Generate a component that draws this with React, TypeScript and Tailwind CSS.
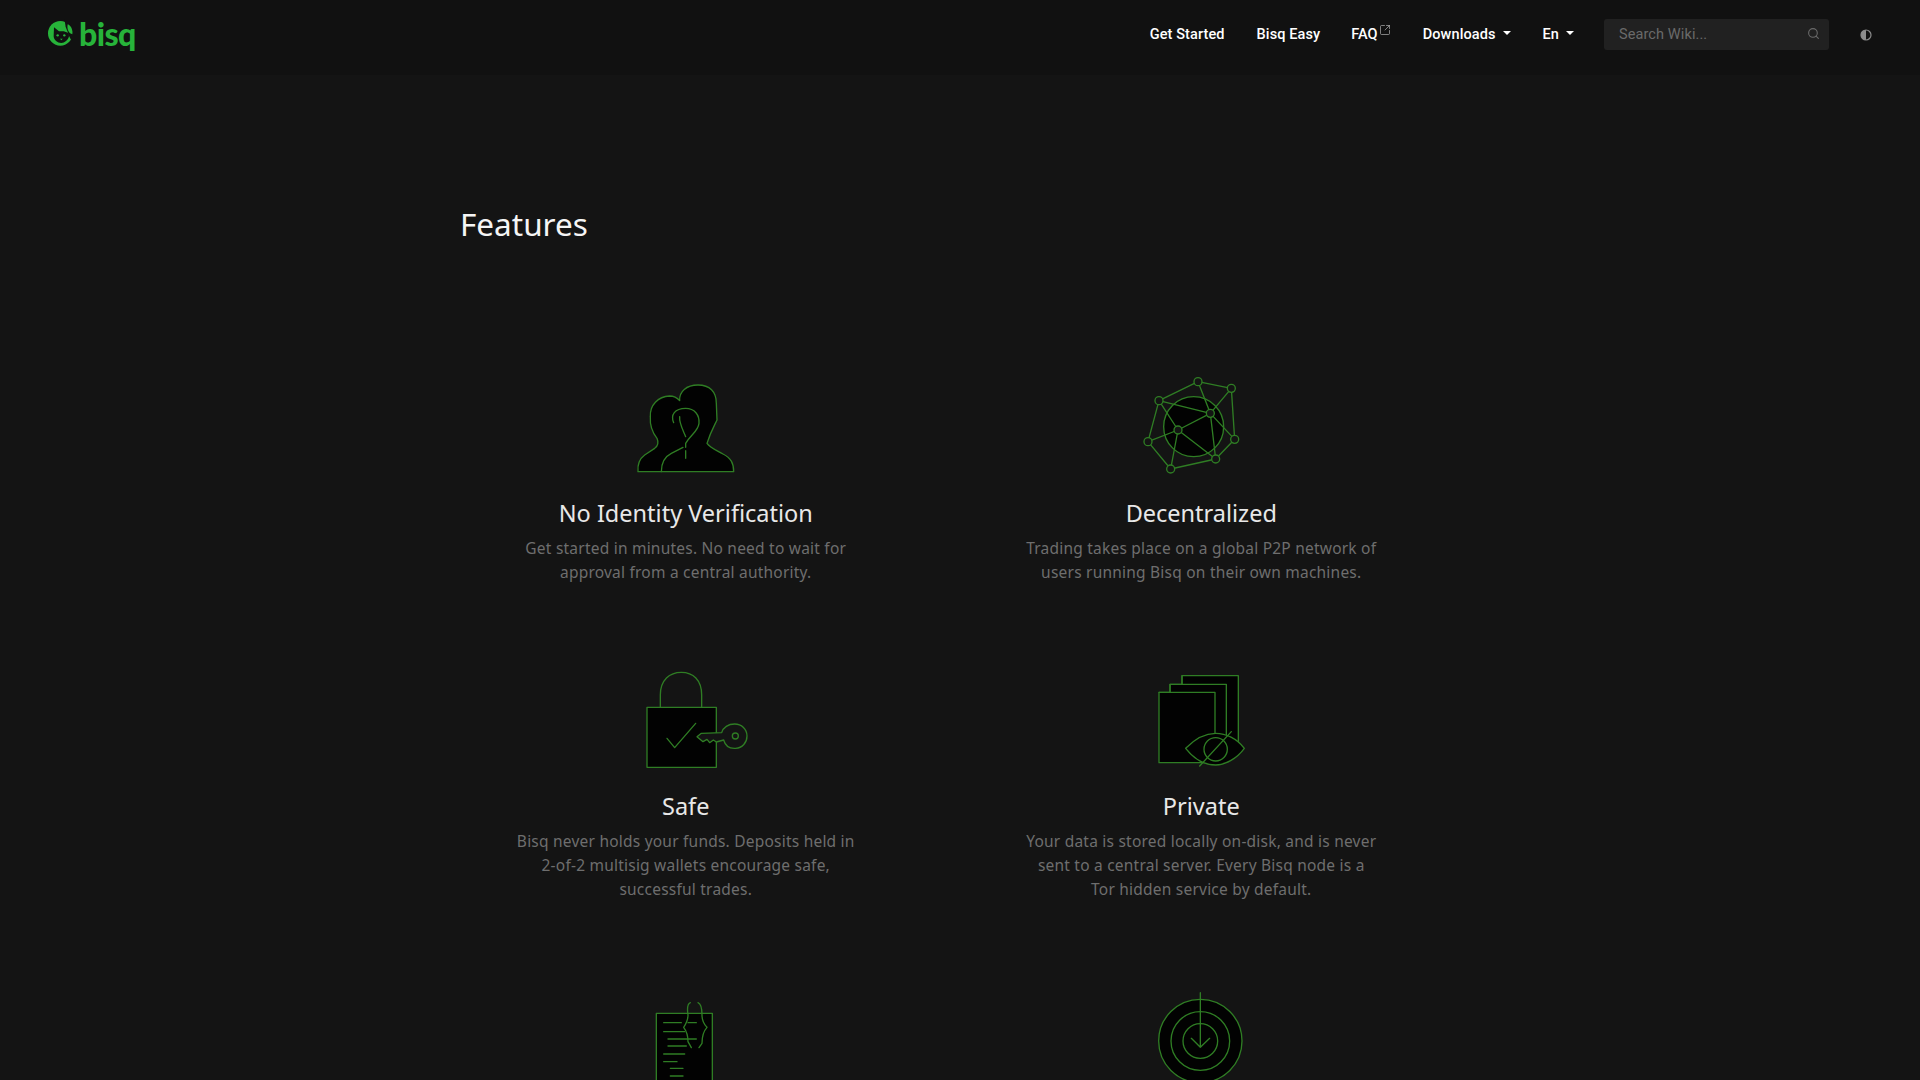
import React from "react";
import { Search, SquareArrowOutUpRight } from "lucide-react";

const STROKE = "#2f7d24";
const BG = "#141414";

function Svg({ vb, w, children }: { vb: string; w: number; children: React.ReactNode }) {
  return (
    <svg viewBox={vb} width={w} height={130} fill="none" stroke={STROKE} strokeWidth={4} strokeLinejoin="round" strokeLinecap="round" className="block">
      {children}
    </svg>
  );
}

function People() {
  return (
    <Svg vb="-11 0 540 390" w={180}>
      <path fill="#020202" d="M115 335C113 310 120 296 135 285L165 265C176 257 178 249 172 235C160 220 150 200 152 170C150 135 175 110 210 108C225 108 232 113 240 122C238 95 260 75 295 75C330 75 350 95 350 130L352 180C345 195 333 215 322 250C330 262 345 268 370 282C395 295 402 310 402 335Z" />
      <path d="M185 335C185 305 195 290 215 280L250 262" />
      <path d="M222 188C212 165 225 145 258 145C285 145 300 165 298 190C295 215 272 225 258 250V262" />
      <path d="M258 272V295" />
      <path d="M240 170C238 190 250 210 258 230" />
    </Svg>
  );
}

function Network() {
  const n: Record<string, [number, number]> = {
    A: [235, 65], B: [335, 85], C: [118, 122], D: [272, 160], E: [175, 210], F: [345, 238], G: [85, 245], H: [288, 297], I: [153, 327],
  };
  const edges = ["AB", "AC", "AD", "BF", "BD", "CD", "CE", "CG", "DE", "DH", "DF", "EG", "EH", "EI", "FH", "GI", "HI"];
  return (
    <Svg vb="-26 0 540 390" w={180}>
      <circle cx={222} cy={200} r={90} fill="#020202" />
      {edges.map((e) => (
        <line key={e} x1={n[e[0]][0]} y1={n[e[0]][1]} x2={n[e[1]][0]} y2={n[e[1]][1]} />
      ))}
      {Object.keys(n).map((k) => (
        <circle key={k} cx={n[k][0]} cy={n[k][1]} r={12} fill={BG} />
      ))}
    </Svg>
  );
}

function Lock() {
  return (
    <Svg vb="-11 -21 420 390" w={140}>
      <path d="M122 140V105C122 60 150 37 185 37C220 37 246 60 246 105V140" />
      <rect x={82} y={142} width={208} height={180} fill="#020202" />
      <path d="M142 235L165 263L228 190" />
      <path fill={BG} d="M306 218L245 220L232 230L250 245L262 238L270 248L281 240L290 246L312 240C318 262 335 266 348 265C368 264 382 248 382 228C382 208 366 192 345 192C326 192 310 202 306 218Z" />
      <circle cx={347} cy={228} r={9} />
    </Svg>
  );
}

function Docs() {
  return (
    <Svg vb="-26 -21 420 390" w={140}>
      <path fill="#020202" d="M127 73V47H296V250L226 308H58V97H91V73Z" />
      <path d="M91 97V73H260V240M127 73V47" />
      <path d="M58 97H226V308" />
      <path fill="#020202" d="M138 265C170 232 200 220 228 220C258 220 292 235 314 265C292 295 258 315 228 315C195 315 165 300 138 265Z" />
      <circle cx={228} cy={268} r={35} />
      <path d="M180 318L275 215" />
    </Svg>
  );
}

function Clip() {
  const lines: [number, number, number][] = [
    [102, 155, 128], [175, 200, 128], [102, 165, 155], [115, 200, 177], [115, 170, 198], [102, 165, 222], [102, 142, 245], [122, 160, 265], [122, 160, 288], [102, 165, 312],
  ];
  return (
    <Svg vb="19 -30 300 390" w={100}>
      <rect x={80} y={100} width={168} height={240} fill="#020202" />
      {lines.map(([a, b, y]) => (
        <line key={y + "-" + a} x1={a} x2={b} y1={y} y2={y} />
      ))}
      <path d="M182 68C172 72 172 85 175 105C175 120 170 130 162 142C172 155 175 165 175 185L185 203" />
      <path d="M205 68C215 72 217 85 217 105C217 120 222 132 232 142C220 155 217 170 217 190L208 203" />
    </Svg>
  );
}

function Radar() {
  return (
    <Svg vb="4 -30 360 390" w={120}>
      <circle cx={182} cy={183} r={125} fill="#020202" />
      <circle cx={182} cy={183} r={88} />
      <circle cx={182} cy={183} r={52} />
      <path d="M182 38V202M155 175L182 202L210 175" />
    </Svg>
  );
}

function Logo() {
  return (
    <div className="flex items-start h-[31px]">
      <svg viewBox="143 60 78 84" width={26} height={28} className="block shrink-0">
        <circle cx={180} cy={103} r={37} fill="#27b33a" />
        <path d="M192 58H225V106H205L196 84Z" fill="#111" />
        <path d="M203 104L225 102V127L211 121Z" fill="#111" />
        <path d="M202 76C212 80 218 92 216 106C206 104 199 92 202 76Z" fill="#27b33a" />
        <path d="M161 85L176 97H190L205 102L206 112C203 124 193 132 183 132C171 132 161 124 160 112Z" fill="#111" />
        <circle cx={172} cy={109} r={3.5} fill="#27b33a" />
        <circle cx={192} cy={109} r={3.5} fill="#27b33a" />
        <path d="M179 119H187L183 124Z" fill="#27b33a" />
      </svg>
      <span className="ml-[5px] font-['Lato',sans-serif] font-black text-[32px] leading-[30px] text-[#27b33a] tracking-[-0.6px]">bisq</span>
    </div>
  );
}

function Caret() {
  return <span className="ml-[7px] inline-block w-0 h-0 border-x-[4px] border-x-transparent border-t-[4px] border-t-white -translate-y-[2px]" />;
}

function Card({ icon, title, lines }: { icon: React.ReactNode; title?: string; lines?: string[] }) {
  return (
    <div className="flex flex-col items-center mb-[69px]">
      <div className="flex justify-center h-[130px]">{icon}</div>
      {title && <h3 className="mt-[7px] text-[23.5px] leading-[32px] text-[#e8e8e8] font-normal">{title}</h3>}
      {lines && (
        <p className="mt-[7px] text-[15.5px] leading-[24px] text-[#6e6e6e] text-center tracking-[0.22px]">
          {lines.map((l, i) => (
            <React.Fragment key={i}>
              {l}
              {i < lines.length - 1 && <br />}
            </React.Fragment>
          ))}
        </p>
      )}
    </div>
  );
}

export default function App() {
  return (
    <div className="h-screen overflow-hidden bg-[#141414] font-['Noto_Sans',sans-serif]">
      <nav className="h-[75px] pb-[6px] bg-[#111111] flex items-center pl-[48px] pr-[48px] font-['Roboto',sans-serif] font-medium text-[14.5px] tracking-[0.1px] text-white">
        <Logo />
        <div className="ml-auto flex items-center">
          <a>Get Started</a>
          <a className="ml-[32px]">Bisq Easy</a>
          <a className="ml-[31px] flex items-start">
            FAQ
            <SquareArrowOutUpRight size={12} strokeWidth={1.25} className="ml-[1px] text-[#c4c4c4]" />
          </a>
          <a className="ml-[32px] flex items-center">Downloads<Caret /></a>
          <a className="ml-[32px] flex items-center">En<Caret /></a>
          <div className="ml-[30px] w-[225px] h-[31px] rounded-[3px] bg-[#212121] flex items-center justify-between pl-[15px] pr-[9px] text-[#6a6a6a] font-normal">
            <span>Search Wiki...</span>
            <Search size={13} className="text-[#6a6a6a] -translate-y-[1px]" />
          </div>
          <svg viewBox="0 0 12 12" width={12} height={12} className="ml-[31px] block">
            <circle cx={6} cy={6} r={5} fill="none" stroke="#8c8c8c" strokeWidth={1.2} />
            <path d="M6 1A5 5 0 0 0 6 11Z" fill="#8c8c8c" />
          </svg>
        </div>
      </nav>
      <main className="w-[1031px] ml-[428px]">
        <h1 className="ml-[32px] mt-[129px] mb-[116px] text-[31.5px] leading-[40px] text-[#f5f5f5] font-normal">Features</h1>
        <div className="grid grid-cols-2">
          <Card icon={<People />} title="No Identity Verification" lines={["Get started in minutes. No need to wait for", "approval from a central authority."]} />
          <Card icon={<Network />} title="Decentralized" lines={["Trading takes place on a global P2P network of", "users running Bisq on their own machines."]} />
          <Card icon={<Lock />} title="Safe" lines={["Bisq never holds your funds. Deposits held in", "2-of-2 multisig wallets encourage safe,", "successful trades."]} />
          <Card icon={<Docs />} title="Private" lines={["Your data is stored locally on-disk, and is never", "sent to a central server. Every Bisq node is a", "Tor hidden service by default."]} />
          <Card icon={<Clip />} />
          <Card icon={<Radar />} />
        </div>
      </main>
    </div>
  );
}
